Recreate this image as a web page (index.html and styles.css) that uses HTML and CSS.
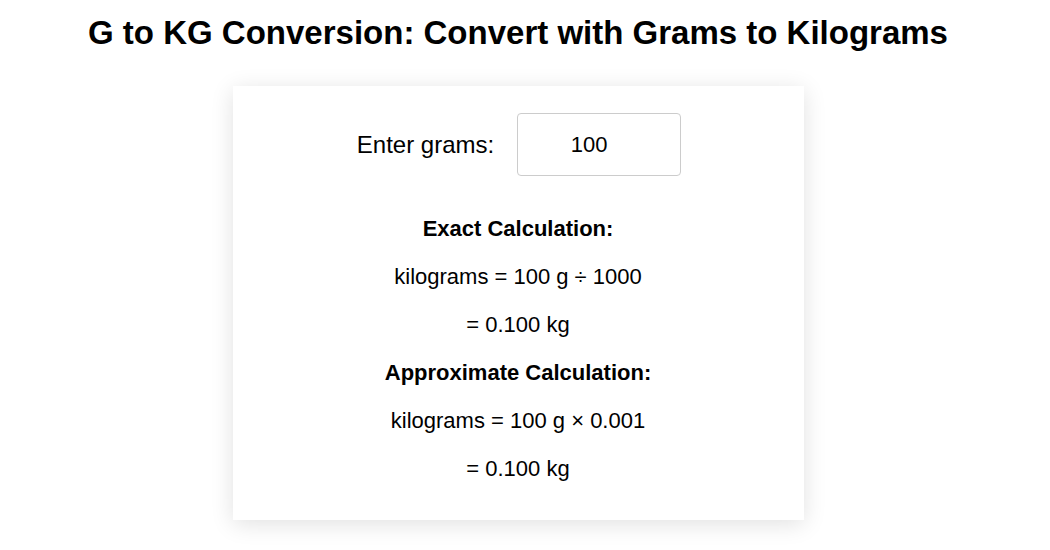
FILE: index.html
```html
<!DOCTYPE html>
<html lang="en">
<head>
  <meta charset="UTF-8">
  <meta name="viewport" content="width=device-width, initial-scale=1.0">
  <title>G to KG Conversion</title>
  <link rel="stylesheet" href="styles.css">
</head>
<body>
  <h1>G to KG Conversion: Convert with Grams to Kilograms</h1>
  <div class="converter">
    <div class="input-row">
      <label for="grams-input">Enter grams:</label>
      <input type="number" id="grams-input" value="100">
    </div>
    <p class="heading">Exact Calculation:</p>
    <p>kilograms = 100 g ÷ 1000</p>
    <p>= 0.100 kg</p>
    <p class="heading">Approximate Calculation:</p>
    <p>kilograms = 100 g × 0.001</p>
    <p>= 0.100 kg</p>
  </div>
</body>
</html>
```

FILE: styles.css
```css
body {
  margin: 0;
  padding: 14px 14px 40px 0;
  font-family: "Liberation Sans", Arial, sans-serif;
  background-color: #fff;
  color: #000;
}

h1 {
  font-size: 33px;
  text-align: center;
  margin: 0 0 34px;
}

.converter {
  width: 531px;
  margin: 0 auto;
  padding: 27px 20px 17px;
  background-color: #fff;
  box-shadow: 0 4px 22px rgba(0, 0, 0, 0.12);
  text-align: center;
}

.input-row {
  display: flex;
  justify-content: center;
  align-items: center;
  gap: 23px;
  padding: 0 0 19px 2px;
  font-size: 24px;
}

input[type="number"] {
  width: 164px;
  height: 63px;
  box-sizing: border-box;
  padding: 0 21px 0 1px;
  border: 1px solid #ccc;
  border-radius: 4px;
  font-family: inherit;
  font-size: 22px;
  text-align: center;
  -moz-appearance: textfield;
}

input[type="number"]::-webkit-inner-spin-button,
input[type="number"]::-webkit-outer-spin-button {
  -webkit-appearance: none;
  margin: 0;
}

p {
  font-size: 22px;
  line-height: 28px;
  margin: 20px 0;
}

.heading {
  font-weight: bold;
}
```
